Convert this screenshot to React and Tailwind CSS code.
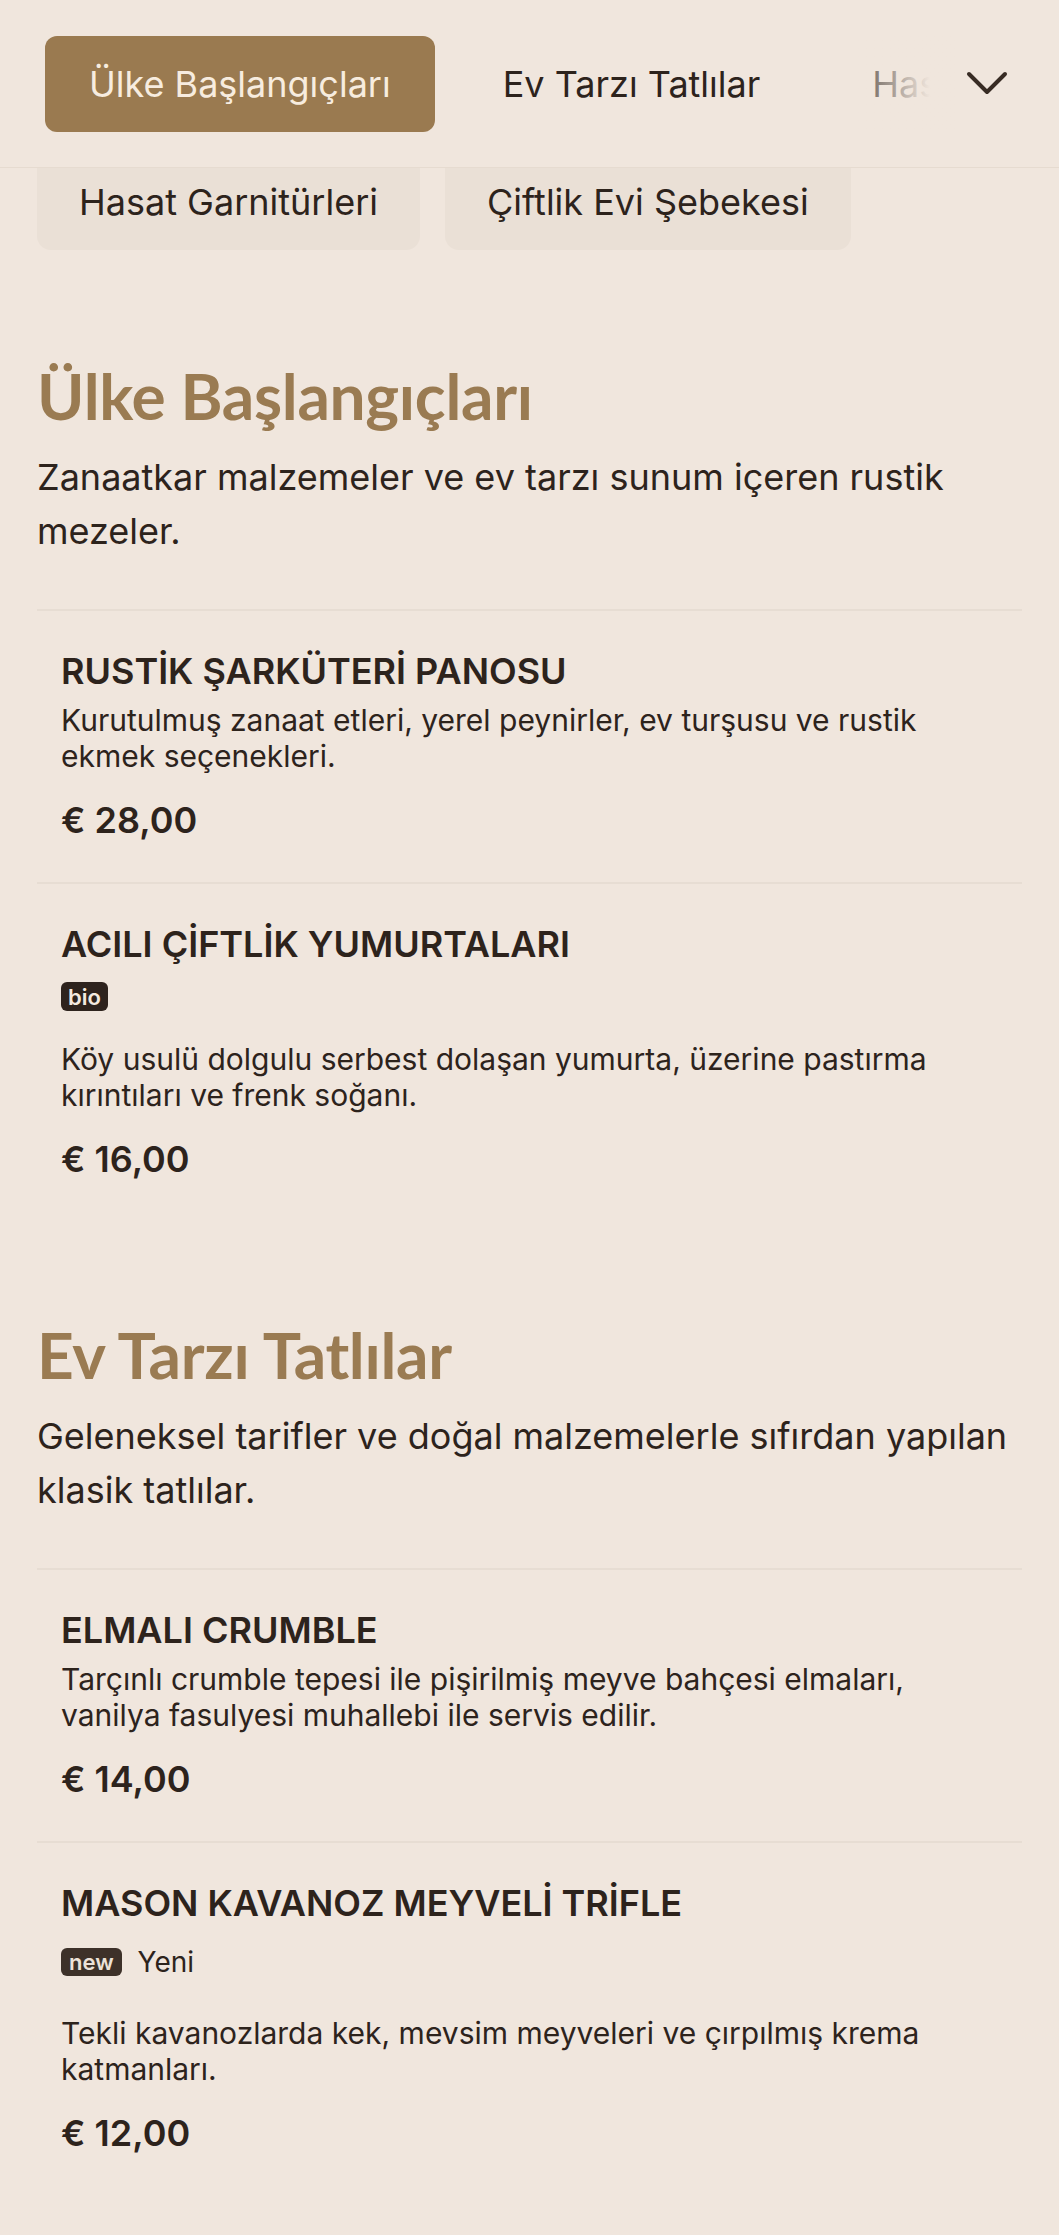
import React from "react";

const sections = [
  {
    title: "Ülke Başlangıçları",
    desc: "Zanaatkar malzemeler ve ev tarzı sunum içeren rustik mezeler.",
    items: [
      {
        name: "RUSTİK ŞARKÜTERİ PANOSU",
        desc: "Kurutulmuş zanaat etleri, yerel peynirler, ev turşusu ve rustik ekmek seçenekleri.",
        price: "€ 28,00",
      },
      {
        name: "ACILI ÇİFTLİK YUMURTALARI",
        badge: "bio",
        desc: "Köy usulü dolgulu serbest dolaşan yumurta, üzerine pastırma kırıntıları ve frenk soğanı.",
        price: "€ 16,00",
      },
    ],
  },
  {
    title: "Ev Tarzı Tatlılar",
    desc: "Geleneksel tarifler ve doğal malzemelerle sıfırdan yapılan klasik tatlılar.",
    items: [
      {
        name: "ELMALI CRUMBLE",
        desc: "Tarçınlı crumble tepesi ile pişirilmiş meyve bahçesi elmaları, vanilya fasulyesi muhallebi ile servis edilir.",
        price: "€ 14,00",
      },
      {
        name: "MASON KAVANOZ MEYVELİ TRİFLE",
        badge: "new",
        badgeLabel: "Yeni",
        desc: "Tekli kavanozlarda kek, mevsim meyveleri ve çırpılmış krema katmanları.",
        price: "€ 12,00",
      },
    ],
  },
];

function Item({ item }) {
  return (
    <div className="border-t-2 border-[#e7ddd3] px-[24px] pt-[38px] pb-[40px]">
      <h3 className="text-[36px] font-semibold leading-[44px] text-[#2d231c]">{item.name}</h3>
      {item.badge ? (
        <>
          <div className="mt-[16px] flex items-center gap-[16px]">
            <span
              className={
                item.badge === "bio"
                  ? "flex h-[29px] items-center rounded-[6px] bg-[#2e231d] px-[7px] text-[22px] font-semibold leading-none text-[#f3e9df]"
                  : "flex h-[28px] items-center rounded-[6px] bg-[#3d3129] px-[8px] text-[22px] font-semibold leading-none text-[#ece2d8]"
              }
            >
              {item.badge}
            </span>
            {item.badgeLabel ? (
              <span className="text-[28px] leading-[42px] text-[#2d231c]">{item.badgeLabel}</span>
            ) : null}
          </div>
          <p className={(item.badgeLabel ? "mt-[32px]" : "mt-[30px]") + " text-[30px] leading-[36px] text-[#2d231c]"}>
            {item.desc}
          </p>
        </>
      ) : (
        <p className="mt-[9px] text-[30px] leading-[36px] text-[#2d231c]">{item.desc}</p>
      )}
      <div className="mt-[24px] text-[36px] font-semibold leading-[44px] text-[#2d231c]">{item.price}</div>
    </div>
  );
}

export default function App() {
  return (
    <div className="min-h-screen bg-[#f0e6dd] font-['Inter',sans-serif] text-[#2d231c]">
      <header className="flex h-[168px] items-center border-b border-[#e6dbd0] pl-[45px] pr-[40px]">
        <div className="relative flex-1 overflow-hidden">
          <div className="flex gap-[24px] whitespace-nowrap">
            <div className="flex h-[96px] shrink-0 items-center rounded-[12px] bg-[#9a7a50] px-[44px] text-[36px] text-[#f7ecdf]">
              Ülke Başlangıçları
            </div>
            <div className="flex h-[96px] shrink-0 items-center rounded-[12px] px-[44px] text-[36px] text-[#2d231c]">
              Ev Tarzı Tatlılar
            </div>
            <div className="flex h-[96px] shrink-0 items-center rounded-[12px] px-[44px] text-[36px] text-[#2d231c]">
              Hasat Garnitürleri
            </div>
          </div>
          <div className="pointer-events-none absolute inset-y-0 right-0 w-[100px] bg-linear-to-r from-[#f0e6dd40] to-[#f0e6dd] to-[75%]" />
        </div>
        <button className="flex w-[64px] items-center justify-center" aria-label="Kategoriler">
          <svg width="44" height="26" viewBox="0 0 44 26" fill="none">
            <polyline points="4,3 22,21 40,3" stroke="#382c24" strokeWidth="4" strokeLinecap="round" strokeLinejoin="round" />
          </svg>
        </button>
      </header>

      <div className="flex h-[82px] items-end gap-[25px] overflow-hidden px-[37px]">
        <div className="flex h-[96px] shrink-0 items-center rounded-[14px] bg-[#eae0d6] px-[42px] text-[36px] text-[#2d231c]">
          Hasat Garnitürleri
        </div>
        <div className="flex h-[96px] shrink-0 items-center rounded-[14px] bg-[#eae0d6] px-[42px] text-[36px] text-[#2d231c]">
          Çiftlik Evi Şebekesi
        </div>
      </div>

      <main className="px-[37px] pb-[80px]">
        {sections.map((s, i) => (
          <section key={s.title} className={i === 0 ? "pt-[108px]" : "pt-[96px]"}>
            <h2 className="font-['Lato',sans-serif] text-[64px] font-bold leading-[76px] tracking-[-0.005em] text-[#9a7b52]">
              {s.title}
            </h2>
            <p className="mt-[16px] text-[36px] leading-[54px] text-[#2d231c]">{s.desc}</p>
            <div className="mt-[51px]">
              {s.items.map((it) => (
                <Item key={it.name} item={it} />
              ))}
            </div>
          </section>
        ))}
      </main>
    </div>
  );
}
